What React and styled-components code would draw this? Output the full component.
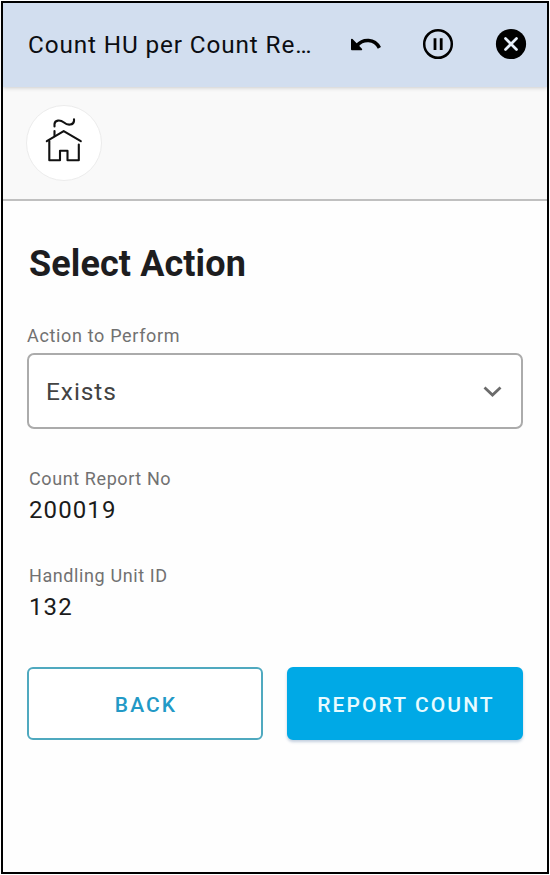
import React from "react";
import styled, { createGlobalStyle } from "styled-components";

const GlobalStyle = createGlobalStyle`
  * { box-sizing: border-box; }
  body { margin: 0; background: #fff; font-family: Roboto, "Liberation Sans", sans-serif; }
`;

const Screen = styled.div`
  width: 548px;
  height: 873px;
  margin: 1px;
  border: 2px solid #000;
  background: #fefefe;
  display: flex;
  flex-direction: column;
`;

const AppBar = styled.header`
  height: 84px;
  flex: none;
  display: flex;
  align-items: center;
  justify-content: space-between;
  padding: 0 20px 0 25px;
  background: #d2deef;
  box-shadow: 0 1px 4px rgba(0, 0, 0, 0.18);
  z-index: 1;
`;

const Title = styled.h1`
  margin: 0;
  font-size: 24.3px;
  font-weight: 400;
  line-height: 28px;
  letter-spacing: 0.88px;
  color: #0b0d12;
  white-space: nowrap;
`;

const BarActions = styled.div`
  display: flex;
  gap: 41px;
  margin-bottom: 2px;
`;

const BarButton = styled.button`
  width: 32px;
  height: 32px;
  padding: 0;
  border: 0;
  background: none;
  svg { display: block; }
`;

const Shelf = styled.nav`
  height: 114px;
  flex: none;
  display: flex;
  align-items: center;
  padding: 0 23px 1px;
  background: #f9f9f9;
  border-bottom: 2px solid #c0c0c0;
`;

const HomeButton = styled.button`
  width: 76px;
  height: 76px;
  padding: 0;
  border: 1px solid #ececec;
  border-radius: 50%;
  background: #fff;
  svg { display: block; }
`;

const Form = styled.main`
  display: flex;
  flex-direction: column;
  padding: 40px 24px 0;
`;

const Heading = styled.h2`
  margin: 0 0 37px 2px;
  font-size: 36px;
  font-weight: 700;
  line-height: 46px;
  letter-spacing: 0.1px;
  color: #1d1d1f;
`;

const Label = styled.span`
  display: block;
  font-size: 18px;
  line-height: 24px;
  letter-spacing: ${(p) => p.$spacing || "0.6px"};
  color: #717171;
`;

const Select = styled.button`
  height: 76px;
  margin: 5px 0 38px;
  padding: 2px 17px 0;
  display: flex;
  align-items: center;
  justify-content: space-between;
  border: 2px solid #ababab;
  border-radius: 7px;
  background: #fff;
  font: 400 24.5px/30px Roboto, sans-serif;
  letter-spacing: 0.9px;
  color: #434343;
`;

const Field = styled.div`
  margin: 0 0 36px 2px;
`;

const Value = styled.span`
  display: block;
  margin-top: 1px;
  font-size: 24px;
  line-height: 36px;
  letter-spacing: 1.1px;
  color: #1b1b1b;
`;

const Actions = styled.div`
  display: grid;
  grid-template-columns: 1fr 1fr;
  gap: 24px;
  margin-top: 6px;
`;

const Button = styled.button`
  height: 73px;
  padding: 2px 0 0 2px;
  border: 2px solid ${(p) => (p.$primary ? "#00a9e6" : "#4fa9bf")};
  border-radius: 6px;
  background: ${(p) => (p.$primary ? "#00a9e6" : "#fff")};
  color: ${(p) => (p.$primary ? "#e8fbff" : "#2299c6")};
  box-shadow: ${(p) => (p.$primary ? "0 2px 3px rgba(60, 100, 150, 0.3)" : "none")};
  font: 500 21px/26px Roboto, sans-serif;
  letter-spacing: 2.1px;
`;

const UndoIcon = () => (
  <svg width="32" height="32" viewBox="0 0 32 32" fill="none">
    <path d="M8 17.5C14 10.5 25.5 10.5 30.4 19.8" stroke="#000" strokeWidth="3.6" />
    <path d="M2.9 11.6L12.3 21.3H2.9Z" fill="#000" stroke="#000" strokeWidth="1.8" strokeLinejoin="round" />
  </svg>
);

const PauseIcon = () => (
  <svg width="32" height="32" viewBox="0 0 32 32" fill="none" stroke="#000">
    <circle cx="16" cy="16" r="13.8" strokeWidth="2.5" />
    <path d="M13 10.2V22M19.2 10.2V22" strokeWidth="2.8" />
  </svg>
);

const CloseIcon = () => (
  <svg width="32" height="32" viewBox="0 0 32 32" fill="none">
    <circle cx="16" cy="16" r="15.1" fill="#000" />
    <path d="M10.5 10.5L21.5 21.5M21.5 10.5L10.5 21.5" stroke="#e6effa" strokeWidth="2.7" strokeLinecap="round" />
  </svg>
);

const HomeIcon = () => (
  <svg width="74" height="74" viewBox="0 0 74 74" fill="none" stroke="#111" strokeWidth="2.1" strokeLinecap="round" strokeLinejoin="round">
    <path d="M19.8 35.2L36.7 25.1L53.8 35.2" />
    <path d="M22.3 35V54.2H33V44.8H40.5V54.2H51.8V38.5" />
    <path d="M27.5 29.8V25M27.5 20.5V18C28 14 33 13.5 37 16.5C41 20 46.5 19 47 15V13.2" />
  </svg>
);

const ChevronIcon = () => (
  <svg width="24" height="24" viewBox="0 0 24 24" fill="none">
    <path d="M4.5 7.5L12.5 15L20.5 7.5" stroke="#6b6b6b" strokeWidth="2.8" />
  </svg>
);

export default function App() {
  return (
    <>
      <GlobalStyle />
      <Screen>
        <AppBar>
          <Title>Count HU per Count Re…</Title>
          <BarActions>
            <BarButton aria-label="Undo"><UndoIcon /></BarButton>
            <BarButton aria-label="Pause"><PauseIcon /></BarButton>
            <BarButton aria-label="Close"><CloseIcon /></BarButton>
          </BarActions>
        </AppBar>
        <Shelf>
          <HomeButton aria-label="Home"><HomeIcon /></HomeButton>
        </Shelf>
        <Form>
          <Heading>Select Action</Heading>
          <Label $spacing="0.66px">Action to Perform</Label>
          <Select>
            Exists
            <ChevronIcon />
          </Select>
          <Field>
            <Label>Count Report No</Label>
            <Value>200019</Value>
          </Field>
          <Field>
            <Label>Handling Unit ID</Label>
            <Value>132</Value>
          </Field>
          <Actions>
            <Button>BACK</Button>
            <Button $primary>REPORT COUNT</Button>
          </Actions>
        </Form>
      </Screen>
    </>
  );
}
